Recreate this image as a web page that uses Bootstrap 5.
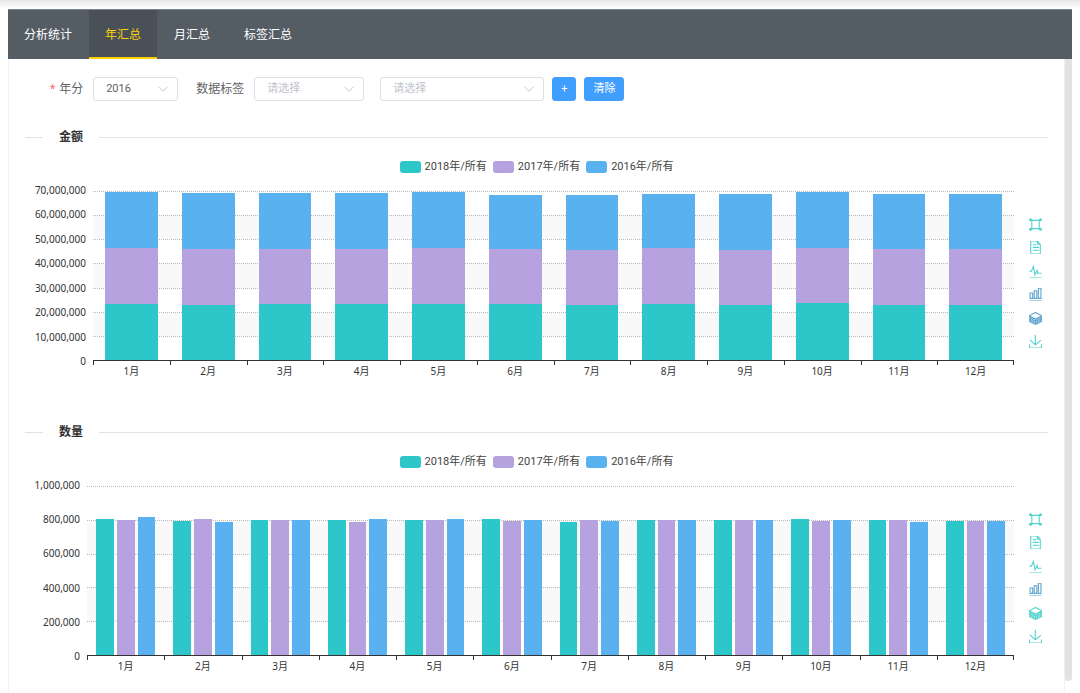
<!DOCTYPE html>
<html lang="zh-CN">
<head>
<meta charset="utf-8">
<meta name="viewport" content="width=device-width, initial-scale=1">
<title>分析统计</title>
<link href="https://cdn.jsdelivr.net/npm/bootstrap@5.3.0/dist/css/bootstrap.min.css" rel="stylesheet">
<style>
  :root { --teal: #2ec7c9; --violet: #b6a2de; --sky: #5ab1ef; --tool: #4fd2cf; --tool-on: #5ca3cf; }
  body { font-family: Roboto, "Noto Sans CJK SC", sans-serif; font-size: 12px; line-height: 18px; color: #606266; }
  .top-shade { height: 9px; background: linear-gradient(#e6e6e6, #fff); }
  .main-nav { background: #545c64; border-top: 1px solid #7c858d; height: 50px; }
  .main-nav .nav-link { color: #fff; padding: 2px 17px 0; height: 100%; border-bottom: 2px solid transparent; }
  .main-nav .nav-item:first-child .nav-link { padding-left: 16px; }
  .main-nav .nav-link.active { color: #ffd004; background: #495057; border-bottom-color: #ffd004; padding-left: 16px; padding-right: 16px; }
  .pane { border: 1px solid #f0f1f8; border-width: 0 1px; }
  .scroll-thumb { width: 7px; background: #e2e2e2; border-radius: 0 0 4px 4px; margin-bottom: 12px; }
  .filters { padding: 18px 0 0 25px; margin-bottom: 27px; }
  .filters label { margin-right: 10px; }
  .form-select { height: 24px; padding: 0 24px 0 12px; font-size: 11px; line-height: 22px; color: #606266;
    border: 1px solid #dcdfe6; border-radius: 3px; background-size: 10px 10px; background-position: right 9px center;
    --bs-form-select-bg-img: url("data:image/svg+xml,%3csvg xmlns='http://www.w3.org/2000/svg' viewBox='0 0 10 10'%3e%3cpath fill='none' stroke='%23c0c4cc' d='M.5 2.8 5 7.3l4.500-4.500'/%3e%3c/svg%3e"); }
  .form-select.is-empty { color: #c0c4cc; }
  .pick-year { width: 85px; margin-right: 18px; }
  .pick-tag { width: 110px; }
  .pick-value { width: 164px; }
  .act { height: 24px; padding: 0 8px; font-size: 11px; line-height: 22px; border-radius: 3px;
    --bs-btn-bg: #409eff; --bs-btn-border-color: #409eff; }
  .required-star { color: #f56c6c; }
  .part-title { font-size: 12px; line-height: 18px; font-weight: 700; color: #303133; }
  .rule { height: 1px; background: #e0e2e8; }
  .rule-short { width: 18px; }
  .chart-part { margin-bottom: 42px; }
  .chart-part:last-child { margin-bottom: 0; }
  .legend-row { font-size: 11px; color: #444; height: 18px; margin-top: 12px; margin-bottom: 15px; gap: 6px; }
  .swatch { width: 21px; height: 12px; border-radius: 3px; }
  .teal { background: var(--teal); } .violet { background: var(--violet); } .sky { background: var(--sky); }
  .chart-grid { display: grid; grid-template-columns: var(--axis) 1fr 34px; grid-template-rows: 170px 20px; font-size: 10px; color: #333;
    font-family: "Noto Sans", "Noto Sans CJK SC", sans-serif; }
  .axis-values { line-height: 16px; margin: -9px 0 -8px; padding-right: 7px; }
  .bands, .bars { grid-column: 2; grid-row: 1; min-width: 0; }
  .bands { border-bottom: 1px solid #333; }
  .band { border-top: 1px dotted #bbb; background: #fefefe; }
  .band.dim { background: #f9f9f9; }
  .bars { padding-bottom: 1px; }
  .month { flex: 1 1 0; min-width: 0; }
  .stacked .month { flex-direction: column; justify-content: flex-end; padding: 0 12px; }
  .grouped .month { align-items: flex-end; gap: 3px; padding: 0 9px; }
  .grouped .bar { flex: 1 1 0; }
  .axis-months { grid-column: 2; grid-row: 2; line-height: 20px; }
  .axis-months .month { background: linear-gradient(#333, #333) left top / 1px 4px no-repeat; }
  .axis-months .month:last-child { background: linear-gradient(#333, #333) left top / 1px 4px no-repeat, linear-gradient(#333, #333) right top / 1px 4px no-repeat; }
  .tools { grid-column: 3; grid-row: 1; padding: 27px 6px 13px 15px; }
  .tool { width: 13px; height: 13px; padding: 0; border: 0; background: none; color: var(--tool); display: block; }
  .tool.on { color: var(--tool-on); }
  .tool svg { display: block; width: 13px; height: 13px; fill: none; stroke: currentColor; stroke-width: 5; overflow: visible; }
</style>
</head>
<body class="min-vh-100 d-flex flex-column">
<svg class="d-none" aria-hidden="true">
  <symbol id="i-area" viewBox="0 0 60 60"><path d="M8 11h44M8 49h44M13 10v40M47 10v40"/><g fill="currentColor" stroke="none"><circle cx="7" cy="8" r="7"/><circle cx="53" cy="8" r="7"/><circle cx="7" cy="52" r="7"/><circle cx="53" cy="52" r="7"/></g></symbol>
  <symbol id="i-data" viewBox="0 0 60 60"><path d="M17.500 17.300H33M45.400 29.500h-28M8 0v60H52V14.800L38.400 0H8zM38.400 0v14.900H52M45.400 43h-28"/></symbol>
  <symbol id="i-line" viewBox="0 0 60 60"><path d="M1 28.900h10l9.300-22 7.400 38 9.700-19.700 3 12.800h17M1 60h58"/></symbol>
  <symbol id="i-bar" viewBox="0 0 60 60"><path d="M5 22.900h12V48h-12zM24 13h12v35h-12zM43.200 1h12v47h-12zM2 60h56"/></symbol>
  <symbol id="i-stack" viewBox="0 0 60 60"><path d="M30.400 2.200-.2 17.500l30.600 15.200L60 17.500zM-.2 17.500v25l30.600 15.300L60 42.500v-25M-.2 25.900l30.600 15.200L60 25.900M-.2 34.200l30.600 15.200L60 34.200M8.200 21.600v25M19 27v25M30.400 33v24M41 27v25M51.900 21.600v25"/></symbol>
  <symbol id="i-save" viewBox="0 0 60 60"><path d="M4.700 22.900l24.600 22.600 25.400-22.100M2 43.600V60h56V43.600M29.200 45.100V0"/></symbol>
</svg>

<div class="top-shade"></div>
<div class="mx-2 flex-grow-1 d-flex flex-column">
  <nav class="main-nav" aria-label="统计">
    <ul class="nav h-100">
      <li class="nav-item"><a class="nav-link d-flex align-items-center" href="#">分析统计</a></li>
      <li class="nav-item"><a class="nav-link d-flex align-items-center active" aria-current="page" href="#">年汇总</a></li>
      <li class="nav-item"><a class="nav-link d-flex align-items-center" href="#">月汇总</a></li>
      <li class="nav-item"><a class="nav-link d-flex align-items-center" href="#">标签汇总</a></li>
    </ul>
  </nav>

  <div class="flex-grow-1 d-flex">
    <main class="pane flex-grow-1 ps-3 pe-3">
      <form class="filters d-flex align-items-center">
        <label for="year"><span class="required-star me-1">*</span>年分</label>
        <select id="year" class="form-select pick-year"><option>2016</option><option>2017</option><option>2018</option></select>
        <label for="tag">数据标签</label>
        <select id="tag" class="form-select is-empty pick-tag me-3"><option>请选择</option></select>
        <select id="tag-value" aria-label="标签值" class="form-select is-empty pick-value me-2"><option>请选择</option></select>
        <button type="button" class="btn btn-primary act me-2">+</button>
        <button type="button" class="btn btn-primary act">清除</button>
      </form>
      <div id="charts"></div>
    </main>
    <div class="scroll-thumb"></div>
  </div>
</div>

<script src="https://cdn.jsdelivr.net/npm/bootstrap@5.3.0/dist/js/bootstrap.bundle.min.js"></script>
<script>
  const years = [['2018年/所有', 'teal'], ['2017年/所有', 'violet'], ['2016年/所有', 'sky']];
  const tools = [['area', '区域缩放'], ['data', '数据视图'], ['line', '切换为折线图'], ['bar', '切换为柱状图'], ['stack', '切换为堆叠'], ['save', '保存为图片']];
  // Each row is one month: 2018, 2017, 2016. Amounts are in millions, counts in thousands.
  const charts = [
    { title: '金额', kind: 'stacked', max: 70, step: 10, unit: 1000000, axis: 68, on: ['bar', 'stack'], rows: [
      [23.0, 23.5, 23.0], [22.9, 23.2, 22.9], [23.2, 22.9, 22.9], [23.2, 22.8, 23.2], [23.4, 23.2, 22.9], [23.2, 22.6, 22.6],
      [22.6, 22.8, 22.8], [23.4, 22.8, 22.4], [22.9, 22.7, 23.0], [23.8, 22.5, 23.3], [22.9, 23.2, 22.8], [22.7, 23.2, 23.0]] },
    { title: '数量', kind: 'grouped', max: 1000, step: 200, unit: 1000, axis: 62, on: ['bar'], rows: [
      [802, 800, 814], [791, 807, 787], [798, 800, 800], [800, 786, 807], [797, 797, 802], [804, 795, 797],
      [786, 800, 791], [797, 800, 799], [800, 799, 798], [804, 793, 797], [797, 797, 788], [793, 793, 791]] }
  ];
  const chartHtml = c => {
    const ticks = [];
    for (let v = c.max; v >= 0; v -= c.step) ticks.push((v * c.unit).toLocaleString('en-US'));
    const bands = ticks.slice(1).map((t, i) => `<div class="band flex-fill${i % 2 ? ' dim' : ''}"></div>`).join('');
    const bars = c.rows.map(r => {
      const cells = r.map((v, i) => `<div class="bar ${years[i][1]}" style="height:${v / c.max * 100}%"></div>`);
      if (c.kind === 'stacked') cells.reverse();
      return `<div class="month d-flex">${cells.join('')}</div>`;
    }).join('');
    return `<section class="chart-part">
      <div class="d-flex align-items-center gap-3"><div class="rule rule-short"></div><h2 class="part-title m-0">${c.title}</h2><div class="rule flex-grow-1"></div></div>
      <div class="legend-row d-flex justify-content-center">${years.map(y => `<div class="d-flex align-items-center gap-1"><span class="swatch ${y[1]}"></span><span>${y[0]}</span></div>`).join('')}</div>
      <div class="chart-grid" style="--axis:${c.axis}px">
        <div class="axis-values d-flex flex-column justify-content-between text-end">${ticks.map(t => `<span>${t}</span>`).join('')}</div>
        <div class="bands d-flex flex-column">${bands}</div>
        <div class="bars ${c.kind} d-flex">${bars}</div>
        <div class="axis-months d-flex text-center">${c.rows.map((r, i) => `<div class="month">${i + 1}月</div>`).join('')}</div>
        <div class="tools d-flex flex-column justify-content-between">${tools.map(t => `<button type="button" class="tool${c.on.includes(t[0]) ? ' on' : ''}" aria-label="${t[1]}"><svg><use href="#i-${t[0]}"/></svg></button>`).join('')}</div>
      </div></section>`;
  };
  document.getElementById('charts').innerHTML = charts.map(chartHtml).join('');
</script>
</body>
</html>
